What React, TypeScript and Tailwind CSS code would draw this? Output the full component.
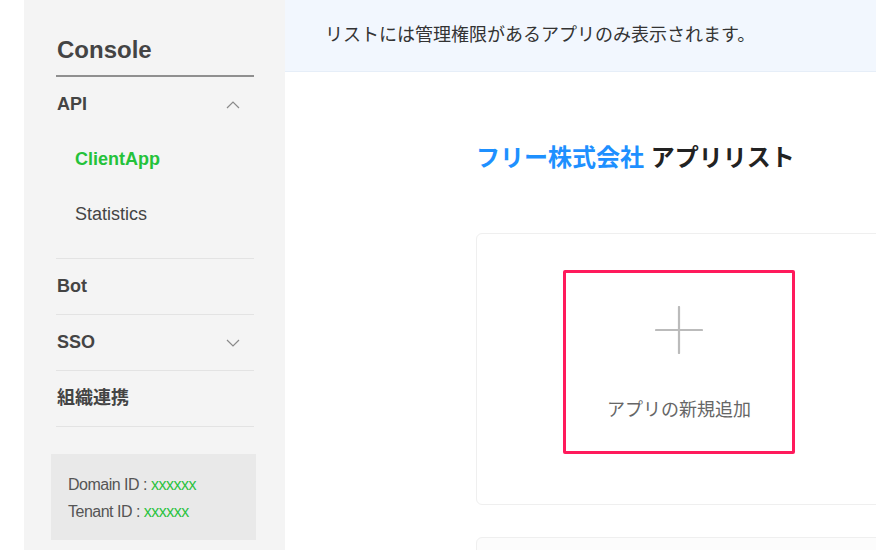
import React from 'react';

const font = { fontFamily: '"Liberation Sans", "Noto Sans CJK JP", sans-serif' };

const Chevron = ({ up }: { up?: boolean }) => (
  <svg width="14" height="8" viewBox="0 0 14 8" fill="none" className="mr-[14px]">
    <polyline
      points={up ? '1,7 7,1 13,7' : '1,1 7,7 13,1'}
      stroke="#8a8a8a"
      strokeWidth="1.2"
      fill="none"
    />
  </svg>
);

const NavRow = ({ label, chevron }: { label: string; chevron?: 'up' | 'down' }) => (
  <div className="flex h-[55px] items-center justify-between">
    <span className="pl-px text-[18px] font-bold text-[#444]">{label}</span>
    {chevron && <Chevron up={chevron === 'up'} />}
  </div>
);

const Divider = () => <div className="h-px bg-[#e3e3e3]" />;

export default function App() {
  return (
    <div className="flex h-[550px] w-[876px] overflow-hidden bg-white" style={font}>
      {/* left margin */}
      <div className="w-6 shrink-0 bg-white" />

      {/* Sidebar */}
      <aside className="w-[261px] shrink-0 bg-[#f4f4f4] pl-8">
        <div className="w-[198px]">
          <div className="pt-[35px] pb-[10px] pl-px text-[24px] font-bold leading-[30px] text-[#444]">Console</div>
          <div className="h-[2px] bg-[#8f8f8f]" />

          <NavRow label="API" chevron="up" />
          <div className="pb-4">
            <div className="flex h-[55px] items-center pl-[19px] text-[18px] font-bold text-[#24c23a]">ClientApp</div>
            <div className="flex h-[55px] items-center pl-[19px] text-[18px] text-[#444]">Statistics</div>
          </div>
          <Divider />
          <NavRow label="Bot" />
          <Divider />
          <NavRow label="SSO" chevron="down" />
          <Divider />
          <NavRow label="組織連携" />
          <Divider />

          <div className="-ml-[5px] mt-[27px] h-[86px] w-[205px] bg-[#e9e9e9] pl-[17px] pt-[17px] text-[16px] leading-[27px] tracking-[-0.5px] text-[#555]">
            <div>
              Domain ID : <span className="text-[#2bc23f]">xxxxxx</span>
            </div>
            <div>
              Tenant ID : <span className="text-[#2bc23f]">xxxxxx</span>
            </div>
          </div>
        </div>
      </aside>

      {/* Main */}
      <main className="flex min-w-0 flex-1 flex-col overflow-hidden">
        <div className="flex h-[72px] shrink-0 items-center border-b border-[#e6eef8] bg-[#f2f7fe] pl-[40px] text-[18px] text-[#333]">
          リストには管理権限があるアプリのみ表示されます。
        </div>

        <div className="pl-[191px]">
          <h1 className="mt-[70px] text-[24px] font-bold leading-[32px] text-[#222]">
            <span className="text-[#1e90ff]">フリー株式会社</span> アプリリスト
          </h1>

          <div className="mt-[59px] flex h-[272px] w-[406px] justify-center rounded-[6px] border border-[#efefef] bg-white pt-[36px]">
            <div className="flex h-[184px] w-[232px] flex-col items-center rounded-[2px] border-[3px] border-[#ff1a5c]">
              <svg width="48" height="48" viewBox="0 0 48 48" className="mt-[33px]">
                <line x1="24" y1="1" x2="24" y2="47" stroke="#bbbbbb" strokeWidth="2.2" strokeLinecap="round" />
                <line x1="1" y1="24" x2="47" y2="24" stroke="#bbbbbb" strokeWidth="2.2" strokeLinecap="round" />
              </svg>
              <div className="mt-[43px] text-[18px] leading-[26px] text-[#666]">アプリの新規追加</div>
            </div>
          </div>

          <div className="mt-[32px] h-[100px] w-[406px] rounded-[6px] border border-[#efefef] bg-[#fcfcfc]" />
        </div>
      </main>
    </div>
  );
}
